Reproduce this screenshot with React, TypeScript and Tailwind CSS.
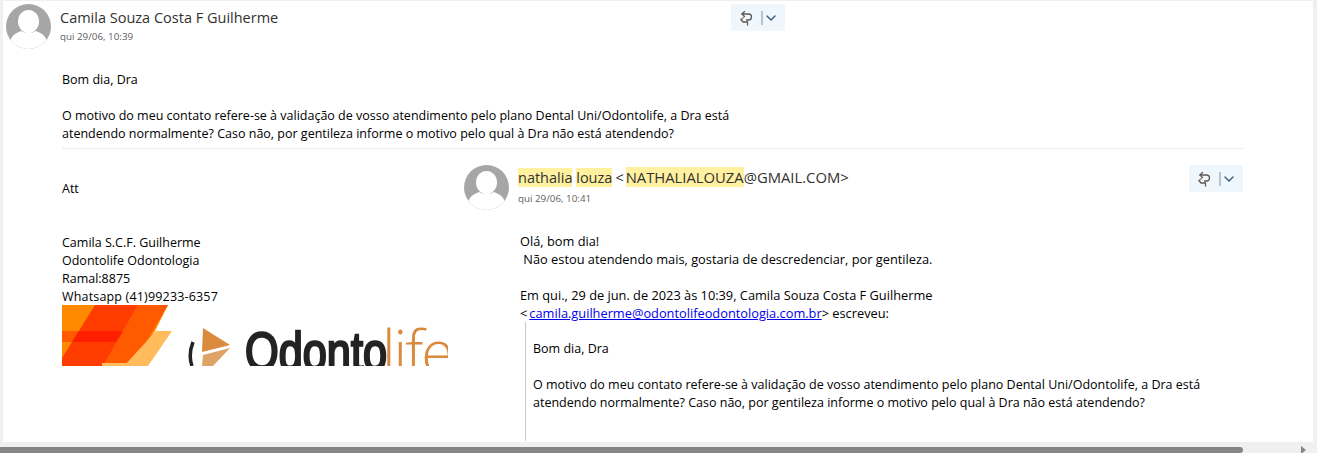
const ReplyButton = () => (
  <div className="flex h-[27px] w-[54px] items-center bg-[#eff6fc] pl-[8px]">
    <svg width="16" height="16" viewBox="0 0 16 16" fill="none" stroke="#5f5a56" strokeWidth="1.3" strokeLinecap="round" strokeLinejoin="round">
      <path d="M5.500 1.500 3 4h6.500a3 3 0 0 1 0 6H7.500" />
      <path d="M3 4 5.500 6.500" />
      <path d="M2 9.500 4.500 7.500" stroke="#a87f5c" />
      <path d="M2 9.500 4 12h4.500" />
      <path d="M8.500 12v3" />
    </svg>
    <span className="ml-[6px] mr-[2px] h-[14px] w-[2px] bg-[#b9c3cc]" />
    <svg width="12" height="12" viewBox="0 0 12 12" fill="none" stroke="#3b5a78" strokeWidth="1.4" strokeLinecap="round" strokeLinejoin="round">
      <path d="M2 4l4 4 4-4" />
    </svg>
  </div>
);

const Avatar = () => (
  <svg width="45" height="45" viewBox="0 0 45 45" className="shrink-0">
    <defs>
      <clipPath id="round">
        <circle cx="22.500" cy="22.500" r="22.500" />
      </clipPath>
    </defs>
    <g clipPath="url(#round)">
      <rect width="45" height="45" fill="#a6a6a6" />
      <ellipse cx="22.500" cy="17.500" rx="10.500" ry="11.500" fill="#fff" />
      <path d="M3 45c0-11 4-15 12-18 4 2.500 11 2.500 15 0 8 3 12 7 12 18z" fill="#fff" />
    </g>
  </svg>
);

const Mark = ({ children }: { children: string }) => <span className="bg-[#fff1a0]">{children}</span>;

const Logo = () => (
  <svg width="386" height="61" viewBox="0 0 386 61" className="mt-[-1px] block">
    <polygon points="0,0 106,0 93,26 70,61 0,61" fill="#ff8a00" />
    <polygon points="76,0 106,0 70,61 41,61" fill="#ff5a00" />
    <polygon points="0,26 71,26 64,37 0,37" fill="#ff5a00" />
    <polygon points="33,0 76,0 41,61 0,61 0,53" fill="#ff3c00" />
    <polygon points="17,26 61,26 54,37 10,37" fill="#ff1e00" />
    <polygon points="94,26 110,26 86,61 62,61" fill="#ffbb5c" />
    <polygon points="40,58 86,58 86,61 40,61" fill="#ffbb5c" />
    <path d="M131 37Q126 50 130 61" stroke="#232323" strokeWidth="3.500" fill="none" />
    <polygon points="141,23 168,40 140,47" fill="#d98a3d" />
    <polygon points="141,50 168,43 151,61 140,61" fill="#e0a366" />
    <text x="183" y="65" fontFamily="'Liberation Sans', sans-serif" fontSize="54" textLength="142" lengthAdjust="spacingAndGlyphs" fill="#232323" stroke="#232323" strokeWidth="2.500">Odonto</text>
    <text x="320" y="69" fontFamily="'Open Sans', sans-serif" fontSize="60" fontWeight="300" letterSpacing="-2" fill="#d98a3d">life</text>
  </svg>
);

export default function App() {
  return (
    <div className="relative h-[453px] w-[1317px] overflow-hidden bg-[#f0f0f0] pl-[3px] pr-[4px] pt-[1px] text-[12.5px] leading-[18px] text-black" style={{ fontFamily: "'Open Sans', 'Noto Sans', sans-serif" }}>
      <div className="h-[441px] overflow-hidden bg-white">
        <div className="flex h-[50px] items-start pl-[3px] pt-[3px]">
          <Avatar />
          <div className="ml-[9px] w-[671px] pt-[4px]">
            <div className="text-[14.500px] leading-[19px] text-[#323130]">Camila Souza Costa F Guilherme</div>
            <div className="mt-[3px] text-[9.800px] leading-[14px] text-[#605e5c]">qui 29/06, 10:39</div>
          </div>
          <ReplyButton />
        </div>

        <div className="ml-[59px] w-[1181px] border-b border-[#edebe9] pb-[5px] pt-[20px]">
          <p>Bom dia, Dra</p>
          <p className="mt-[18px] w-[700px]">
            O motivo do meu contato refere-se à validação de vosso atendimento pelo plano Dental Uni/Odontolife, a Dra está atendendo normalmente? Caso não, por gentileza informe o motivo pelo qual à Dra não está atendendo?
          </p>
        </div>

        <div className="flex">
          <div className="ml-[59px] w-[402px] pt-[31px]">
            <p>Att</p>
            <div className="mt-[36px]">
              <p>Camila S.C.F. Guilherme</p>
              <p>Odontolife Odontologia</p>
              <p>Ramal:8875</p>
              <p className="tracking-[0.17px]">Whatsapp (41)99233-6357</p>
            </div>
            <Logo />
          </div>

          <div className="w-[779px] pt-[16px]">
            <div className="flex items-start">
              <Avatar />
              <div className="ml-[9px] w-[671px] pt-[3px]">
                <div className="text-[14.500px] leading-[19px] text-[#323130]">
                  <Mark>nathalia</Mark> <Mark>louza</Mark>
                  <span className="ml-[3px] mr-[2px]">&lt;</span>
                  <span className="text-[14.800px]"><Mark>NATHALIALOUZA</Mark>@GMAIL.COM&gt;</span>
                </div>
                <div className="mt-[5px] text-[9.800px] leading-[14px] text-[#605e5c]">qui 29/06, 10:41</div>
              </div>
              <ReplyButton />
            </div>
            <div className="ml-[56px] pt-[22px] text-[12.800px]">
              <p>Olá, bom dia!</p>
              <p>&nbsp;Não estou atendendo mais, gostaria de descredenciar, por gentileza.</p>
              <p className="mt-[18px] w-[440px]">
                Em qui., 29 de jun. de 2023 às 10:39, Camila Souza Costa F Guilherme &lt;<a className="ml-[2px] text-[#0000ee] underline">camila.guilherme@odontolifeodontologia.com.br</a>&gt; escreveu:
              </p>
              <div className="ml-[5px] h-[119px] border-l border-[#c8c8c8] pl-[7px] pt-[18px] text-[12.500px]">
                <p>Bom dia, Dra</p>
                <p className="mt-[18px] w-[700px]">
                  O motivo do meu contato refere-se à validação de vosso atendimento pelo plano Dental Uni/Odontolife, a Dra está atendendo normalmente? Caso não, por gentileza informe o motivo pelo qual à Dra não está atendendo?
                </p>
              </div>
            </div>
          </div>
        </div>
      </div>

      <div className="absolute bottom-0 left-0 flex h-[6px] w-full items-center">
        <div className="h-full w-[1243px] rounded-r-[3px] bg-[#858585]" />
        <div className="ml-auto mr-[11px] h-0 w-0 border-y-[4px] border-l-[5px] border-y-transparent border-l-[#858585]" />
      </div>
    </div>
  );
}
